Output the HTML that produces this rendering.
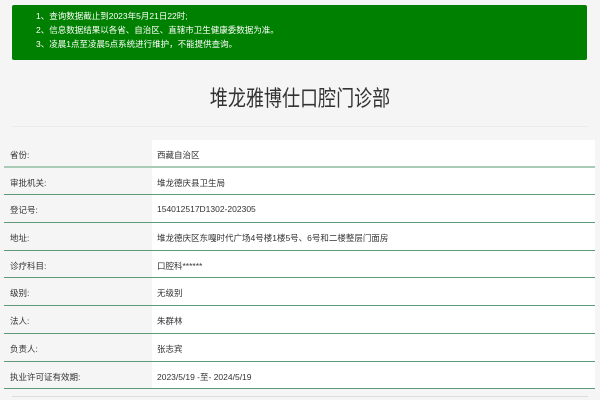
<!DOCTYPE html>
<html><head><meta charset="utf-8"><style>
*{margin:0;padding:0;box-sizing:border-box}
body{width:600px;height:400px;overflow:hidden;background:#f5f5f5;font-family:"Liberation Sans","Noto Sans CJK SC",sans-serif;color:#333;position:relative}
.notice{position:absolute;left:12px;top:5px;width:575px;height:55px;background:#008000;border-radius:2px;color:#fff;font-size:8.5px;line-height:14px;padding:4px 0 0 24px}
h1{position:absolute;left:0;width:600px;text-align:center;top:86px;font-size:22px;line-height:26px;font-weight:normal;color:#333;white-space:nowrap;transform:scaleX(0.82);transform-origin:center top}
.hr{position:absolute;left:12px;top:126px;width:576px;height:1px;background:#ebebeb}
.tbl{position:absolute;left:4px;top:140px;width:591px}
.row{height:27.7px;border-bottom:1px solid #5f9a78;position:relative;font-size:8.5px}
.row:first-child{border-bottom:2px solid #a8cbb5}
.row .l{position:absolute;left:6px;top:9px}
.row .v{position:absolute;left:148px;top:0;right:0;bottom:0;background:#fff;padding:9px 0 0 5px}
.bot{position:absolute;left:12px;top:396px;width:576px;height:1px;background:#ddd}
</style></head><body>
<div class="notice">1、查询数据截止到2023年5月21日22时;<br>2、信息数据结果以各省、自治区、直辖市卫生健康委数据为准。<br>3、凌晨1点至凌晨5点系统进行维护，不能提供查询。</div>
<h1>堆龙雅博仕口腔门诊部</h1>
<div class="hr"></div>
<div class="tbl">
<div class="row"><span class="l">省份:</span><span class="v">西藏自治区</span></div>
<div class="row"><span class="l">审批机关:</span><span class="v">堆龙德庆县卫生局</span></div>
<div class="row"><span class="l">登记号:</span><span class="v">154012517D1302-202305</span></div>
<div class="row"><span class="l">地址:</span><span class="v">堆龙德庆区东嘎时代广场4号楼1楼5号、6号和二楼整层门面房</span></div>
<div class="row"><span class="l">诊疗科目:</span><span class="v">口腔科******</span></div>
<div class="row"><span class="l">级别:</span><span class="v">无级别</span></div>
<div class="row"><span class="l">法人:</span><span class="v">朱群林</span></div>
<div class="row"><span class="l">负责人:</span><span class="v">张志宾</span></div>
<div class="row"><span class="l">执业许可证有效期:</span><span class="v">2023/5/19 -至- 2024/5/19</span></div>
</div>
<div class="bot"></div>
</body></html>
